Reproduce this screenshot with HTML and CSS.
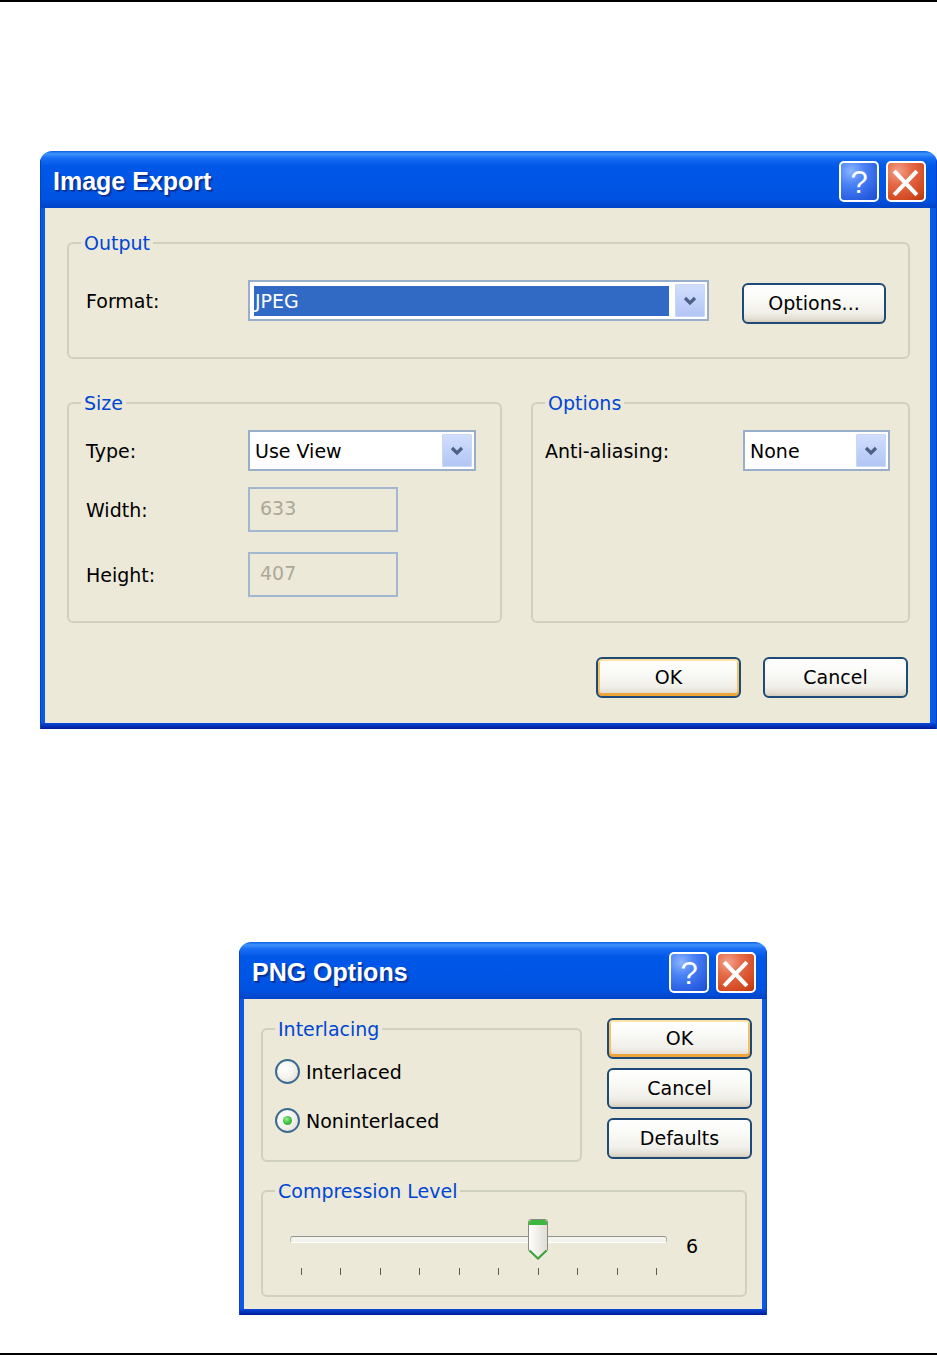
FILE: index.html
```html
<!DOCTYPE html>
<html lang="en">
<head>
<meta charset="utf-8">
<title>Image Export</title>
<link rel="stylesheet" href="styles.css">
</head>
<body>
<div class="page">
  <div class="rule"></div>

  <section class="dialog dialog-export">
    <header class="titlebar">
      <span class="title">Image Export</span>
      <div class="title-buttons">
        <span class="tb-btn tb-help">?</span>
        <span class="tb-btn tb-close"><svg width="40" height="40" viewBox="0 0 40 40"><path d="M9.5 10.5 L29.5 31.5 M29.5 10.5 L9.5 31.5" stroke="#fff" stroke-width="4" stroke-linecap="square" fill="none"/></svg></span>
      </div>
    </header>
    <div class="frame frame-export">
      <div class="body body-export">
        <fieldset class="group group-output">
          <legend>Output</legend>
          <div class="group-inner inner-output">
            <span class="field-label lbl-main">Format:</span>
            <div class="combo combo-format">
              <span class="combo-value is-selected">JPEG</span>
              <span class="combo-btn"><svg width="14" height="10" viewBox="0 0 14 10"><polyline points="2,2 7,7 12,2" fill="none" stroke="#4d6185" stroke-width="3.2"/></svg></span>
            </div>
            <button class="btn btn-options">Options...</button>
          </div>
        </fieldset>

        <div class="groups-row">
          <fieldset class="group group-size">
            <legend>Size</legend>
            <div class="group-inner inner-size">
              <div class="field-row">
                <span class="field-label lbl-main">Type:</span>
                <div class="combo combo-type">
                  <span class="combo-value">Use View</span>
                  <span class="combo-btn"><svg width="14" height="10" viewBox="0 0 14 10"><polyline points="2,2 7,7 12,2" fill="none" stroke="#4d6185" stroke-width="3.2"/></svg></span>
                </div>
              </div>
              <div class="field-row row-width">
                <span class="field-label lbl-main">Width:</span>
                <div class="textbox is-disabled">633</div>
              </div>
              <div class="field-row row-height">
                <span class="field-label lbl-main">Height:</span>
                <div class="textbox is-disabled">407</div>
              </div>
            </div>
          </fieldset>
          <fieldset class="group group-options">
            <legend>Options</legend>
            <div class="group-inner inner-options">
              <div class="field-row">
                <span class="field-label lbl-aa">Anti-aliasing:</span>
                <div class="combo combo-aa">
                  <span class="combo-value">None</span>
                  <span class="combo-btn"><svg width="14" height="10" viewBox="0 0 14 10"><polyline points="2,2 7,7 12,2" fill="none" stroke="#4d6185" stroke-width="3.2"/></svg></span>
                </div>
              </div>
            </div>
          </fieldset>
        </div>

        <div class="actions">
          <button class="btn is-default">OK</button>
          <button class="btn">Cancel</button>
        </div>
      </div>
    </div>
  </section>

  <section class="dialog dialog-png">
    <header class="titlebar">
      <span class="title">PNG Options</span>
      <div class="title-buttons">
        <span class="tb-btn tb-help">?</span>
        <span class="tb-btn tb-close"><svg width="40" height="40" viewBox="0 0 40 40"><path d="M9.5 10.5 L29.5 31.5 M29.5 10.5 L9.5 31.5" stroke="#fff" stroke-width="4" stroke-linecap="square" fill="none"/></svg></span>
      </div>
    </header>
    <div class="frame">
      <div class="body body-png">
        <div class="png-top">
          <fieldset class="group group-interlace">
            <legend>Interlacing</legend>
            <div class="group-inner inner-interlace">
              <div class="radio-row">
                <span class="radio"></span>
                <span>Interlaced</span>
              </div>
              <div class="radio-row">
                <span class="radio is-checked"></span>
                <span>Noninterlaced</span>
              </div>
            </div>
          </fieldset>
          <div class="side-buttons">
            <button class="btn is-default">OK</button>
            <button class="btn">Cancel</button>
            <button class="btn">Defaults</button>
          </div>
        </div>

        <fieldset class="group group-compress">
          <legend>Compression Level</legend>
          <div class="group-inner inner-compress">
            <div class="slider">
              <div class="slider-track"></div>
              <div class="slider-ticks">
                <i></i><i></i><i></i><i></i><i></i><i></i><i></i><i></i><i></i><i></i>
              </div>
              <svg class="slider-thumb" width="22" height="43" viewBox="0 0 22 43">
                <defs>
                  <linearGradient id="thumbFill" x1="0" y1="0" x2="1" y2="0">
                    <stop offset="0" stop-color="#ffffff"/>
                    <stop offset="1" stop-color="#dedcd3"/>
                  </linearGradient>
                </defs>
                <path d="M1.5 4 Q1.5 1.5 4 1.5 H18 Q20.5 1.5 20.5 4 V32 L11 41.5 L1.5 32 Z" fill="url(#thumbFill)" stroke="#8a8a7e"/>
                <path d="M2 5 Q2 2 5 2 H17 Q20 2 20 5 V7 H2 Z" fill="#3cb93c"/>
                <polyline points="2.5,32.5 11,40.5 19.5,32.5" fill="none" stroke="#3aa53a" stroke-width="2"/>
              </svg>
            </div>
            <span class="slider-value">6</span>
          </div>
        </fieldset>
      </div>
    </div>
  </section>

  <div class="rule rule-bottom"></div>
</div>
</body>
</html>
```

FILE: styles.css
```css
* {
  box-sizing: border-box;
}

html,
body {
  margin: 0;
  padding: 0;
  background: #ffffff;
}

body {
  width: 937px;
  height: 1355px;
  overflow: hidden;
  font-family: "DejaVu Sans", "Noto Sans", sans-serif;
  font-size: 19px;
  color: #000000;
}

.page {
  height: 1355px;
  display: flex;
  flex-direction: column;
}

.rule {
  flex: none;
  height: 2px;
  background: #000000;
}

.rule-bottom {
  margin-top: auto;
}

/* ---------- dialog frame ---------- */

.dialog {
  flex: none;
  display: flex;
  flex-direction: column;
  border-radius: 12px 12px 0 0;
  overflow: hidden;
}

.dialog-export {
  margin: 149px 0 0 40px;
  width: 897px;
}

.dialog-png {
  margin: 213px 0 0 239px;
  width: 528px;
}

.titlebar {
  flex: none;
  height: 57px;
  display: flex;
  align-items: flex-start;
  padding: 0 11px 0 13px;
  background: linear-gradient(to bottom,
    #0b5fe4 0%,
    #3f94fb 5%,
    #1a6ef5 12%,
    #0058e8 26%,
    #0055e5 60%,
    #0052e0 85%,
    #0043c6 100%);
  box-shadow: inset 1px 0 0 #0a3fc8, inset -1px 0 0 #0a3fc8;
}

.title {
  margin-top: 16px;
  font-family: "Liberation Sans", Arial, sans-serif;
  font-weight: bold;
  font-size: 25px;
  line-height: 29px;
  color: #ffffff;
  text-shadow: 1px 1px 0 #0a2a8a, 2px 2px 1px rgba(10, 30, 110, 0.5);
  white-space: nowrap;
}

.title-buttons {
  margin-left: auto;
  margin-top: 10px;
  display: flex;
  gap: 7px;
}

.tb-btn {
  width: 40px;
  height: 41px;
  border: 2px solid #ffffff;
  border-radius: 5px;
  display: flex;
  align-items: center;
  justify-content: center;
  overflow: hidden;
}

.tb-help {
  background: radial-gradient(circle at 28% 22%, #8cb4ff 0%, #4a82f6 35%, #2a5fe2 75%, #1d4ccc 100%);
  color: #ffffff;
  font-family: "Liberation Sans", Arial, sans-serif;
  font-size: 31px;
  line-height: 1;
  padding-top: 1px;
}

.tb-close {
  background: radial-gradient(circle at 28% 22%, #f3a08a 0%, #e56a48 35%, #d24a22 75%, #b8340c 100%);
}

.tb-close svg {
  flex: none;
}

.frame {
  padding: 0 5px 6px 5px;
  background: linear-gradient(to bottom,
    #0b5ae6 0,
    #0b5ae6 calc(100% - 6px),
    #0b4ad8 calc(100% - 6px),
    #001b98 100%);
  box-shadow: inset 1px 0 0 #0a3fc8, inset -1px 0 0 #0a3fc8;
}

.frame-export {
  padding-right: 7px;
}

.body {
  background: #ece9d8;
}

/* ---------- group boxes ---------- */

.group {
  margin: 0;
  padding: 0;
  min-width: 0;
  border: 2px solid #d0d0bf;
  border-radius: 6px;
}

.group legend {
  margin-left: 12px;
  padding: 0 3px;
  color: #0046d5;
  font-size: 19px;
  line-height: 22px;
}

.field-label {
  flex: none;
  white-space: nowrap;
}

.lbl-main {
  width: 162px;
}

.lbl-aa {
  width: 198px;
}

.field-row {
  display: flex;
  align-items: center;
}

/* ---------- export dialog body ---------- */

.body-export {
  padding: 24px 20px 25px 22px;
}

.inner-output {
  display: flex;
  align-items: center;
  padding: 26px 17px 36px 17px;
}

.combo {
  flex: none;
  height: 41px;
  display: flex;
  padding: 2px;
  border: 2px solid #98aecb;
  background: #ffffff;
}

.combo-value {
  flex: 1;
  display: flex;
  align-items: center;
  margin: 2px 6px 1px 2px;
  padding: 0 0 1px 1px;
  white-space: nowrap;
}

.combo-value.is-selected {
  background: #316ac5;
  color: #ffffff;
}

.combo-btn {
  flex: none;
  width: 30px;
  display: flex;
  align-items: center;
  justify-content: center;
  border-radius: 2px;
  background: linear-gradient(to bottom, #d2defc 0%, #c1d2fa 50%, #b1c5f4 100%);
  box-shadow: inset 0 0 0 1px #c9d6f5;
}

.combo-format {
  width: 461px;
}

.combo-type {
  width: 228px;
}

.combo-aa {
  width: 147px;
}

.btn {
  flex: none;
  width: 145px;
  height: 41px;
  margin: 0;
  padding: 0 0 2px;
  border: 2px solid #1e4a78;
  border-radius: 6px;
  background: linear-gradient(to bottom, #ffffff 0%, #fafaf7 35%, #f0efe9 75%, #e3ded2 92%, #d4ccbc 100%);
  font-family: "DejaVu Sans", "Noto Sans", sans-serif;
  font-size: 19px;
  color: #000000;
  display: flex;
  align-items: center;
  justify-content: center;
}

.btn.is-default {
  box-shadow:
    inset 0 2px 0 #fde3a8,
    inset 0 -3px 0 #eea53a,
    inset 2px 0 0 #f6c064,
    inset -2px 0 0 #f6c064;
}

.btn-options {
  width: 144px;
  margin: 3px 0 -3px 33px;
}

.groups-row {
  display: flex;
  gap: 29px;
  margin-top: 33px;
}

.group-size {
  width: 435px;
}

.group-options {
  flex: 1;
}

.inner-size {
  display: flex;
  flex-direction: column;
  padding: 16px 17px 24px 17px;
}

.row-width {
  margin-top: 16px;
}

.row-height {
  margin-top: 20px;
}

.textbox {
  flex: none;
  width: 150px;
  height: 45px;
  display: flex;
  align-items: center;
  padding: 0 0 3px 10px;
  border: 2px solid #a3b7d1;
}

.textbox.is-disabled {
  color: #aca899;
  background: #ece9d8;
}

.inner-options {
  padding: 16px 12px 24px 12px;
}

.actions {
  display: flex;
  justify-content: flex-end;
  gap: 22px;
  margin: 34px 2px 0 0;
}

/* ---------- PNG dialog body ---------- */

.body-png {
  padding: 19px 10px 12px 17px;
}

.png-top {
  display: flex;
  align-items: flex-start;
  gap: 25px;
}

.group-interlace {
  width: 322px;
}

.inner-interlace {
  display: flex;
  flex-direction: column;
  gap: 24px;
  padding: 19px 12px 27px 12px;
}

.radio-row {
  display: flex;
  align-items: center;
  gap: 6px;
  height: 25px;
  white-space: nowrap;
}

.radio {
  flex: none;
  width: 25px;
  height: 25px;
  border-radius: 50%;
  border: 2px solid #3b6a90;
  background: radial-gradient(circle at 35% 35%, #ffffff 0%, #f5f4ef 45%, #dcd8cb 100%);
  display: flex;
  align-items: center;
  justify-content: center;
}

.radio.is-checked::after {
  content: "";
  width: 9px;
  height: 9px;
  border-radius: 50%;
  background: radial-gradient(circle at 40% 35%, #9cef9c 0%, #3fc23f 50%, #1f9a1f 100%);
}

.side-buttons {
  display: flex;
  flex-direction: column;
  gap: 9px;
}

.group-compress {
  width: 486px;
  margin-top: 18px;
}

.inner-compress {
  display: flex;
  align-items: flex-start;
  padding: 16px 0 20px 27px;
}

.slider {
  position: relative;
  flex: none;
  width: 377px;
  padding-top: 18px;
}

.slider-track {
  height: 7px;
  border-radius: 3px;
  border: 1px solid #b7b6ae;
  border-top-color: #93928c;
  border-bottom-color: #ffffff;
  background: #f4f3ee;
}

.slider-ticks {
  display: flex;
  justify-content: space-between;
  height: 7px;
  margin-top: 25px;
  padding: 0 10px 0 11px;
}

.slider-ticks i {
  width: 1px;
  height: 7px;
  background: #5c5c5c;
}

.slider-thumb {
  position: absolute;
  left: 237px;
  top: 0;
}

.slider-value {
  margin: 17px 0 0 19px;
  line-height: 22px;
}
```
